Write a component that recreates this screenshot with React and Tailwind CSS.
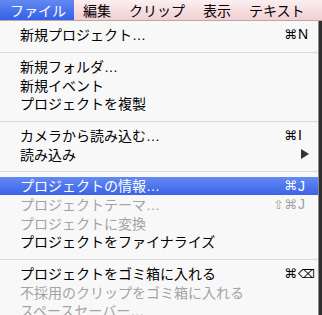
import React from "react";

const groups = [
  [{ t: "新規プロジェクト", e: true, mod: "⌘", key: "N" }],
  [{ t: "新規フォルダ", e: true }, { t: "新規イベント" }, { t: "プロジェクトを複製" }],
  [{ t: "カメラから読み込む", e: true, mod: "⌘", key: "I" }, { t: "読み込み", sub: true }],
  [
    { t: "プロジェクトの情報", e: true, mod: "⌘", key: "J", hl: true },
    { t: "プロジェクトテーマ", e: true, mod: "⇧⌘", key: "J", dis: true },
    { t: "プロジェクトに変換", dis: true },
    { t: "プロジェクトをファイナライズ" },
  ],
  [
    { t: "プロジェクトをゴミ箱に入れる", mod: "⌘", key: "⌫" },
    { t: "不採用のクリップをゴミ箱に入れる", dis: true },
    { t: "スペースセーバー", e: true, dis: true },
  ],
];

function Row({ it }) {
  const color = it.hl ? "text-white" : it.dis ? "text-[#a3a3a3]" : "text-black";
  return (
    <div
      className={
        "flex h-[18.5px] items-center pl-[20px] " +
        color +
        (it.hl ? " bg-gradient-to-b from-[#6489f3] to-[#3b63e6]" : "")
      }
    >
      <span className="flex-1 whitespace-nowrap text-[14px] leading-none">
        {it.t}
        {it.e && <span className="font-['Liberation_Sans',sans-serif]">…</span>}
      </span>
      <span className="w-[40px] text-right font-['DejaVu_Sans',sans-serif] text-[13px] leading-none">
        {it.mod || ""}
      </span>
      <span className="w-[21px] pl-[1px] font-['Liberation_Sans','DejaVu_Sans',sans-serif] text-[14px] leading-none">
        {it.sub ? (
          <svg width="9" height="10" viewBox="0 0 9 10" className="ml-[3px]">
            <path d="M0 0 L8 5 L0 10 Z" fill="#333" />
          </svg>
        ) : it.key === "⌫" ? (
          <span className="font-['DejaVu_Sans',sans-serif] text-[12px]">⌫</span>
        ) : (
          it.key || ""
        )}
      </span>
    </div>
  );
}

export default function App() {
  const bar = ["編集", "クリップ", "表示", "テキスト"];
  return (
    <div className="h-[315px] w-[322px] overflow-hidden bg-[#2f2f2f] font-['Noto_Sans_CJK_JP',sans-serif]">
      <div className="flex h-[21px] items-stretch border-b border-[#b8a8a9] bg-gradient-to-b from-[#fbeff0] to-[#f2cfd2]">
        <div className="flex items-center bg-gradient-to-b from-[#6488f2] to-[#3460e6] pl-[10px] pr-[8px] text-[14px] leading-none text-white">
          ファイル
        </div>
        {bar.map((b) => (
          <div key={b} className="flex items-center px-[9px] text-[14px] leading-none text-black">
            {b}
          </div>
        ))}
      </div>
      <div className="flex">
        <div className="w-[318px] bg-[#f9f8f8] pt-[4px]">
          {groups.map((g, gi) => (
            <div key={gi}>
              {gi > 0 && (
                <div className="pt-[8px] pb-[4.5px]">
                  <div className="h-px bg-[#dadada]" />
                </div>
              )}
              {g.map((it, i) => (
                <Row key={i} it={it} />
              ))}
            </div>
          ))}
        </div>
        <div className="w-[1px] bg-[#8a8a8a]" />
      </div>
    </div>
  );
}
